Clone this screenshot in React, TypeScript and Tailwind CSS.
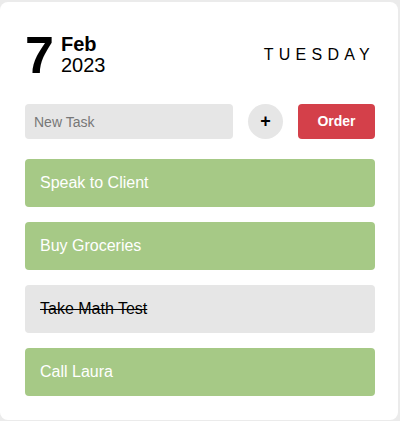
import { useState } from "react";

interface Task {
  text: string;
  done: boolean;
}

const initialTasks: Task[] = [
  { text: "Speak to Client", done: false },
  { text: "Buy Groceries", done: false },
  { text: "Take Math Test", done: true },
  { text: "Call Laura", done: false },
];

const App = () => {
  const [tasks, setTasks] = useState<Task[]>(initialTasks);
  const [value, setValue] = useState("");

  const onAdd = () => {
    if (!value.trim()) return;
    setTasks([...tasks, { text: value, done: false }]);
    setValue("");
  };

  const toggle = (i: number) => {
    setTasks(tasks.map((t, idx) => (idx === i ? { ...t, done: !t.done } : t)));
  };

  return (
    <div className="w-[400px] h-[421px] bg-[#ebebeb] pt-[2px] pr-[2px] font-['Liberation_Sans',Arial,sans-serif]">
      <div className="h-[418px] bg-white rounded-lg pl-[25px] pr-[23px] pt-[30px]">
        <div className="flex items-center justify-between h-[45px]">
          <div className="flex items-center">
            <div className="text-[52px] leading-none font-bold text-black">7</div>
            <div className="ml-[7px] flex flex-col text-black">
              <div className="text-[20px] leading-[21px] font-bold">Feb</div>
              <div className="text-[20px] leading-[21px]">2023</div>
            </div>
          </div>
          <div className="text-[16px] tracking-[0.33em] text-black">TUESDAY</div>
        </div>
        <div className="flex items-center mt-[27px]">
          <input
            value={value}
            onChange={(e) => setValue(e.target.value)}
            placeholder="New Task"
            className="w-[208px] h-[35px] bg-[#e6e6e6] rounded px-[9px] text-[14px] text-black placeholder:text-[#777] outline-none"
          />
          <button
            onClick={onAdd}
            className="ml-[15px] w-[35px] h-[35px] rounded-full bg-[#e6e6e6] flex items-center justify-center text-black text-[18px] font-bold"
          >
            +
          </button>
          <button className="ml-[15px] w-[77px] h-[35px] rounded bg-[#d4404a] text-white text-[14px] font-bold">
            Order
          </button>
        </div>
        <div className="flex flex-col gap-[15px] mt-[20px]">
          {tasks.map((t, i) => (
            <div
              key={i}
              onClick={() => toggle(i)}
              className={
                t.done
                  ? "h-[48px] rounded bg-[#e6e6e6] flex items-center px-[15px] text-[16px] text-black line-through cursor-pointer"
                  : "h-[48px] rounded bg-[#a6c986] flex items-center px-[15px] text-[16px] text-white cursor-pointer"
              }
            >
              {t.text}
            </div>
          ))}
        </div>
      </div>
    </div>
  );
};

export default App;
